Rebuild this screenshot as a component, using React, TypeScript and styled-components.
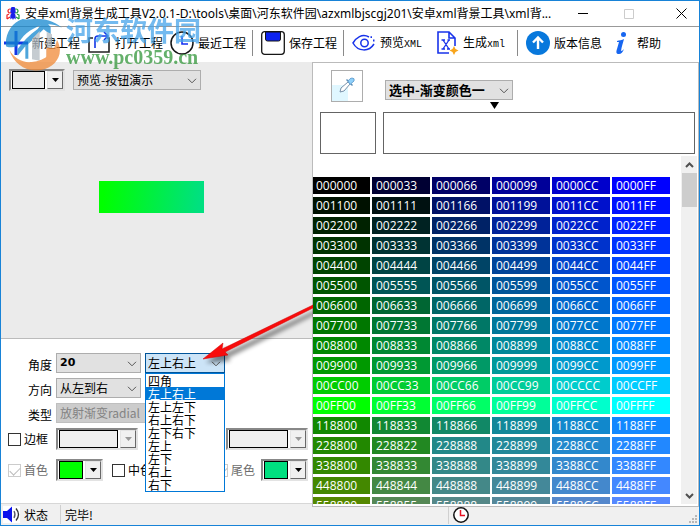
import React from 'react';
import styled, { createGlobalStyle, css } from 'styled-components';

const ui = `'Noto Sans CJK SC', sans-serif`;

const GlobalStyle = createGlobalStyle`
  * { box-sizing: border-box; }
  body { margin: 0; background: #fff; font: 12px/16px ${ui}; color: #000; }
  button, select, input { font: inherit; color: inherit; margin: 0; }
`;

const Window = styled.div`
  position: relative;
  display: flex;
  flex-direction: column;
  height: 100vh;
  border: 1px solid #1883d7;
  background: #fff;
  overflow: hidden;
`;

const TitleBar = styled.header`
  display: flex;
  align-items: center;
  flex: none;
  height: 26px;
  padding-left: 5px;
  border-bottom: 1px solid #999;
`;

const Title = styled.h1`
  flex: 1;
  min-width: 0;
  margin: 0 0 0 5px;
  font: 400 12px/24px 'Noto Sans', ${ui};
  white-space: nowrap;
`;

const Caption = styled.div`
  display: flex;
`;

const CaptionButton = styled.button`
  display: grid;
  place-items: center;
  width: 46px;
  height: 24px;
  padding: 0;
  border: 0;
  background: none;
  &:last-child { width: 47px; padding-left: 11px; }
`;

const Toolbar = styled.nav`
  display: flex;
  align-items: center;
  flex: none;
  gap: 7px;
  height: 35px;
  padding: 0 3px 3px;
`;

const Tool = styled.button`
  display: flex;
  align-items: center;
  flex: none;
  gap: 4px;
  width: 76px;
  height: 26px;
  padding: 0;
  border: 0;
  background: none;
  white-space: nowrap;
  svg { flex: none; }
`;

const Latin = styled.span`
  font-family: 'Liberation Mono', monospace;
  font-size: 10px;
`;

const Divider = styled.span`
  flex: none;
  width: 1px;
  height: 26px;
  margin: 0 1px 0 -1px;
  background: #8a8a8a;
`;

const Main = styled.main`
  display: grid;
  grid-template-columns: 311px minmax(0, 1fr);
  flex: 1;
  min-height: 0;
`;

const LeftPane = styled.section`
  display: flex;
  flex-direction: column;
  min-height: 0;
`;

const Preview = styled.div`
  display: flex;
  flex-direction: column;
  flex: 1;
  padding: 7px 8px;
  background: #ebebeb;
  border-bottom: 1px solid #bbb;
`;

const Line = styled.div`
  display: flex;
  align-items: center;
  gap: 8px;
`;

const Sample = styled.div`
  width: 105px;
  height: 32px;
  margin: 90px auto 0 90px;
  background: linear-gradient(95deg, #00ff00 5%, #00e080 95%);
`;

const Form = styled.form`
  display: flex;
  flex-direction: column;
  gap: 5px;
  padding: 14px 4px 22px 7px;
`;

const Row = styled.div`
  display: flex;
  align-items: center;
  height: 20px;
`;

const ColourRow = styled(Row)<{ $last?: boolean }>`
  height: 22px;
  margin-top: ${(p) => (p.$last ? 4 : 0)}px;
`;

const FieldLabel = styled.label`
  width: 48px;
  padding: 4px 4px 0 0;
  text-align: right;
`;

const SelectBox = styled.span<{ $width: number; $active?: boolean }>`
  position: relative;
  display: block;
  flex: none;
  width: ${(p) => p.$width}px;
  margin-right: ${(p) => (p.$active ? 0 : 4)}px;
  svg.chevron { position: absolute; right: 4px; top: 8px; pointer-events: none; }
`;

const NativeSelect = styled.select<{ $tone?: 'bold' | 'number' | 'active' }>`
  display: block;
  width: 100%;
  height: 20px;
  padding: 0 0 0 3px;
  border: 1px solid #adadad;
  border-radius: 0;
  outline: 0;
  background: #e1e1e1;
  appearance: none;
  line-height: 18px;
  &:disabled { background: #ccc; border-color: #bfbfbf; color: #838383; opacity: 1; }
  ${(p) => p.$tone === 'bold' && css`font-weight: 700; font-size: 13px;`}
  ${(p) => p.$tone === 'number' && css`font: 700 11px/18px 'DejaVu Sans', sans-serif;`}
  ${(p) => p.$tone === 'active' && css`padding-left: 2px; background: #cce4f7; border-color: #005499;`}
`;

const Options = styled.ul`
  position: absolute;
  z-index: 3;
  top: 20px;
  left: 0;
  width: 100%;
  margin: 0;
  padding: 0;
  border: 1px solid #0078d7;
  background: #fff;
  list-style: none;
`;

const Option = styled.li<{ $on: boolean }>`
  height: 13px;
  padding-left: 2px;
  line-height: 13px;
  background: ${(p) => (p.$on ? '#0078d7' : '#fff')};
  color: ${(p) => (p.$on ? '#fff' : '#000')};
`;

const Check = styled.label<{ $off?: boolean; $width?: number }>`
  display: flex;
  align-items: center;
  flex: none;
  gap: 3px;
  width: ${(p) => p.$width ?? 48}px;
  color: ${(p) => (p.$off ? '#6d6d6d' : '#000')};
  white-space: nowrap;
`;

const Tick = styled.input`
  appearance: none;
  flex: none;
  width: 13px;
  height: 13px;
  border: 1px solid #333;
  background: #fff;
  &:disabled { border-color: #ccc; }
  &:checked::after {
    content: '';
    display: block;
    width: 9px;
    height: 5px;
    margin: 2px 0 0 1px;
    border: solid #bbb;
    border-width: 0 0 1px 1px;
    transform: rotate(-45deg);
  }
`;

const ComboFrame = styled.button<{ $width: number }>`
  display: flex;
  flex: none;
  gap: 2px;
  width: ${(p) => p.$width}px;
  height: 22px;
  padding: 0;
  border: 2px solid;
  border-color: #888 #e3e3e3 #e3e3e3 #888;
  background: #fff;
`;

const Swatch = styled.span<{ $colour: string }>`
  flex: 1;
  margin-left: 1px;
  border: 1px solid #000;
  background: ${(p) => p.$colour};
`;

const Drop = styled.span`
  display: grid;
  place-items: center;
  width: 16px;
  background: #f0f0f0;
  border: 1px solid;
  border-color: #e3e3e3 #696969 #696969 #e3e3e3;
`;

const Spacer = styled.span`
  flex: 1;
`;

const RightPane = styled.section`
  position: relative;
  z-index: 1;
  display: flex;
  flex-direction: column;
  min-height: 0;
  margin-bottom: -4px;
  border: 1px solid #bbb;
  background: #fff;
`;

const Picker = styled.div`
  display: flex;
  align-items: flex-start;
  gap: 22px;
  padding: 7px 18px 0;
`;

const Dropper = styled.button`
  width: 32px;
  height: 32px;
  padding: 0;
  border: 1px solid #adadad;
  background: linear-gradient(#e0f7ff, #e0f7ff) left bottom / 16px 16px no-repeat #fff;
`;

const StopPicker = styled.div`
  display: flex;
  flex-direction: column;
  padding-top: 10px;
  svg.marker { align-self: flex-end; margin: 2px 18px 0 0; }
`;

const Swatches = styled.div`
  display: flex;
  flex: none;
  gap: 7px;
  height: 42px;
  margin: 3px 3px 2px 7px;
`;

const Well = styled.div<{ $grow?: boolean }>`
  flex: ${(p) => (p.$grow ? '1' : '0 0 56px')};
  border: 1px solid #646464;
`;

const Palette = styled.div`
  display: flex;
  flex: 1;
  min-height: 0;
  padding: 0 1px 2px 0;
`;

const Clip = styled.div`
  flex: 1;
  min-width: 0;
  overflow: hidden;
  padding-top: 18px;
`;

const Colours = styled.table`
  margin-left: -3px;
  border-spacing: 2px 3px;
  table-layout: fixed;
`;

const Cell = styled.td<{ $hex: string }>`
  width: 58px;
  min-width: 58px;
  height: 17px;
  padding: 0 0 0 4px;
  background: #${(p) => p.$hex};
  color: #fff;
  font: 12px/17px 'Open Sans', sans-serif;
`;

const ScrollTrack = styled.div`
  display: flex;
  flex-direction: column;
  align-items: center;
  justify-content: space-between;
  width: 16px;
  background: #f0f0f0;
`;

const ScrollEnd = styled.span`
  display: grid;
  place-items: center;
  height: 17px;
`;

const Thumb = styled.span`
  width: 15px;
  height: 34px;
  margin-bottom: auto;
  background: #cdcdcd;
`;

const StatusBar = styled.footer`
  display: grid;
  grid-template-columns: 59px 388px minmax(0, 1fr);
  align-items: center;
  flex: none;
  height: 22px;
  background: #f0f0f0;
  border-top: 1px solid #d7d7d7;
`;

const StatusCell = styled.div`
  display: flex;
  align-items: center;
  gap: 4px;
  height: 19px;
  padding-left: 2px;
  & + & { border-left: 1px solid #d0d0d0; padding-left: 4px; }
`;

const Grip = styled.svg`
  align-self: flex-end;
  margin: 0 1px 0 auto;
`;

const Watermark = styled.div`
  position: absolute;
  z-index: 5;
  left: 3px;
  top: 16px;
  display: flex;
  gap: 2px;
  opacity: 0.75;
  pointer-events: none;
`;

const WatermarkName = styled.div`
  font: 700 27px/26px ${ui};
  color: #45a4ea;
`;

const WatermarkSite = styled.div`
  font: 700 20px/28px 'Liberation Serif', serif;
  color: #32963a;
`;

const Pointer = styled.svg`
  position: absolute;
  z-index: 4;
  left: 52px;
  top: -52px;
  pointer-events: none;
`;

const Chevron = () => (
  <svg className="chevron" width="10" height="6" viewBox="0 0 10 6" fill="none" stroke="#555">
    <path d="M1 .8 5 4.8 9 .8" />
  </svg>
);

function Select({ id, label, value, width, tone, disabled, children }: {
  id: string; label?: string; value: string; width: number;
  tone?: 'bold' | 'number' | 'active'; disabled?: boolean; children?: React.ReactNode;
}) {
  return (
    <SelectBox $width={width} $active={tone === 'active'}>
      <NativeSelect id={id} aria-label={label} $tone={tone} disabled={disabled} defaultValue={value}>
        <option>{value}</option>
      </NativeSelect>
      <Chevron />
      {children}
    </SelectBox>
  );
}

function ColourCombo({ label, width, colour, disabled }: {
  label: string; width: number; colour: string; disabled?: boolean;
}) {
  return (
    <ComboFrame type="button" aria-label={label} $width={width} disabled={disabled}>
      <Swatch $colour={colour} />
      <Drop>
        <svg width="7" height="4" viewBox="0 0 7 4"><path d="M0 0h7L3.5 4z" fill={disabled ? '#999' : '#000'} /></svg>
      </Drop>
    </ComboFrame>
  );
}

const person = 'M0-4a2.2 2.2 0 1 1 .1 0M-2.6 4.5C-3-1-2-2 0-2s3 1 2.6 6.5L1 3 0 5-1 3z';

const AppIcon = () => (
  <svg width="14" height="14" viewBox="0 0 14 14">
    <g fill="none" stroke="#e22" strokeWidth="1.2"><circle cx="4" cy="4" r="2" /><path d="M1 12V8l2-1M1 12l3-2" /></g>
    <g fill="none" stroke="#1c9a3a" strokeWidth="1.2"><circle cx="10" cy="4" r="2" /><path d="M13 12V8l-2-1M13 12l-3-2" /></g>
    <path d={person} transform="translate(7 8)" fill="#1a20e8" />
    <circle cx="7" cy="4.2" r="2.6" fill="#1a20e8" />
  </svg>
);

const NewIcon = () => (
  <svg width="24" height="24" viewBox="0 0 24 24"><path d="M12 0v24M0 12h24" stroke="#1236e6" strokeWidth="3" /></svg>
);
const OpenIcon = () => (
  <svg width="24" height="24" viewBox="0 0 24 24" fill="none" strokeWidth="1.6">
    <path d="M6 7H2v14h20V7h-2" stroke="#222" />
    <path d="M8 17V8q0-3 3-3h10M17 1l4 4-4 4" stroke="#1236e6" />
  </svg>
);
const ClockIcon = () => (
  <svg width="24" height="24" viewBox="0 0 24 24" fill="none">
    <circle cx="12" cy="12" r="11" stroke="#151515" strokeWidth="1.5" />
    <path d="M12 5v8h6" stroke="#1430f0" strokeWidth="1.6" />
  </svg>
);
const SaveIcon = () => (
  <svg width="24" height="24" viewBox="0 0 24 24">
    <rect x=".7" y=".7" width="22.6" height="22.6" rx="3" fill="#fff" stroke="#151515" strokeWidth="1.3" />
    <path d="M4.500 1h15v7q0 2-2 2h-11q-2 0-2-2z" fill="#0c22f0" stroke="#151515" />
  </svg>
);
const EyeIcon = () => (
  <svg width="24" height="24" viewBox="0 0 24 24" fill="none" stroke="#1833ea" strokeWidth="1.5">
    <path d="M17 6C10 2 4 7 1 12c5 9 16 9 21 1" /><circle cx="12.5" cy="12" r="3.7" />
    <path d="M18.500 6.200h1.500M21 9.500h1.500" strokeWidth="1.8" />
  </svg>
);
const XmlIcon = () => (
  <svg width="24" height="24" viewBox="0 0 24 24" fill="none" stroke="#1833ea" strokeWidth="1.6">
    <path d="M14 22H3V1h11l6 6v8M14 1v6h6" />
    <path d="m8 9 6 9M14 9l-6 9M6.500 9H10M12.500 9H15M6.500 18H10M12 18h3" strokeWidth="1.3" />
    <path d="m19 15 1.500 3 3 1.500-3 1.500-1.500 3-1.500-3-3-1.500 3-1.500z" fill="#f8a51c" stroke="none" />
  </svg>
);
const UpdateIcon = () => (
  <svg width="24" height="24" viewBox="0 0 24 24" fill="none">
    <circle cx="12" cy="12" r="12" fill="#0878dc" />
    <path d="M12 18V6.500M7 11.500l5-5 5 5" stroke="#fff" strokeWidth="2.4" />
  </svg>
);
const HelpIcon = () => (
  <svg width="24" height="24" viewBox="0 0 24 24" fill="#1766f0">
    <circle cx="14.5" cy="3.5" r="2.5" />
    <path d="M8 10c2-.6 5-1 7-2-1 4-2.500 8-3 12 1 0 2-1 3-2-1 3-3 5-5 5-3 0-3-2-2-5l2-7H8z" />
  </svg>
);
const SpeakerIcon = () => (
  <svg width="17" height="17" viewBox="0 0 17 17" fill="none">
    <path fill="#fff" d="M0 0h17v17H0z" />
    <path d="M0 5h4l5-4.500v16L4 12H0z" fill="#0b12ee" />
    <path d="M11 5q2 3.500 0 7" stroke="#556" strokeWidth="1.3" /><path d="M13 2.500q5 6 0 12" stroke="#333" strokeWidth="1.3" />
  </svg>
);
const AlarmIcon = () => (
  <svg width="16" height="16" viewBox="0 0 16 16" fill="#fff">
    <circle cx="8" cy="8" r="7.2" stroke="#111" strokeWidth="1.5" />
    <path d="M7.500 3v5.500H12" fill="none" stroke="#e81123" strokeWidth="1.5" />
  </svg>
);
const DropperIcon = () => (
  <svg width="30" height="30" viewBox="0 0 30 30" fill="none">
    <path d="m8 21 1-4 7-6 2 2-6 7z" fill="#fff" stroke="#7890a8" />
    <path d="m14.500 8.500 6 6" stroke="#5f8db5" strokeWidth="1.4" />
    <path d="M16 10q2-3 4-3 3 0 2 3l-4 3.500z" fill="#8fd0fa" stroke="#6aa5d4" />
  </svg>
);

const WatermarkLogo = () => (
  <svg width="60" height="54" viewBox="0 0 180 162">
    <path d="M6 88C2 50 24 16 56 6c20 6 70-14 118 26-26-11-44-12-60-7C80 34 52 58 40 86c-10 5-27 7-34 2z" fill="#1487cf" />
    <path d="M41 96c14-20 34-42 60-60l20-28 19 22v24l-21-17-46 44v44h-9V88l-23 28z" fill="#1487cf" />
    <path d="M84 66l23-24v89l-23-4zM128 44l16 8v66l-16 12z" fill="#b4bcc2" />
    <path d="M16 99c16 26 40 39 67 36 43-4 68-30 76-67 24 44-5 83-47 91C66 167 30 141 16 99z" fill="#f18a38" />
    <path d="M127 92h26c-3 15-10 25-22 36h-4z" fill="#f18a38" />
  </svg>
);

const channels = ['00', '33', '66', '99', 'CC', 'FF'];
const greens = ['00', '11', '22', '33', '44', '55', '66', '77', '88', '99', 'CC', 'FF'];
const colourRows: string[][] = [
  ...greens.map((g) =>
    channels.map((b, i) => `00${g}${i === 1 && g > '00' && g < '66' ? g : b}`)),
  channels.map((b) => `1188${b}`),
  ...['22', '33', '44', '55'].map((r) =>
    ['00', r, '88', '99', 'CC', 'FF'].map((b) => `${r}88${b}`)),
];

const corners = ['四角', '左上右上', '左上左下', '右上右下', '左下右下', '左上', '左下', '右上', '右下'];

export default function App() {
  return (
    <Window>
      <GlobalStyle />
      <TitleBar>
        <AppIcon />
        <Title>{'安卓xml背景生成工具V2.0.1-D:\\tools\\桌面\\河东软件园\\azxmlbjscgj201\\安卓xml背景工具\\xml背...'}</Title>
        <Caption>
          <CaptionButton aria-label="最小化"><svg width="10" height="11"><path d="M0 5.500h10" stroke="#000" /></svg></CaptionButton>
          <CaptionButton aria-label="最大化" disabled><svg width="10" height="10"><path d="M.5.500h9v9h-9z" fill="none" stroke="#ccc" /></svg></CaptionButton>
          <CaptionButton aria-label="关闭"><svg width="11" height="11"><path d="m.5.500 10 10m0-10-10 10" stroke="#000" /></svg></CaptionButton>
        </Caption>
      </TitleBar>

      <Toolbar>
        <Tool><NewIcon />新建工程</Tool>
        <Tool><OpenIcon />打开工程</Tool>
        <Tool><ClockIcon />最近工程</Tool>
        <Divider />
        <Tool><SaveIcon />保存工程</Tool>
        <Divider />
        <Tool><EyeIcon /><span>预览<Latin>XML</Latin></span></Tool>
        <Tool><XmlIcon /><span>生成<Latin>xml</Latin></span></Tool>
        <Divider />
        <Tool><UpdateIcon />版本信息</Tool>
        <Tool><HelpIcon />帮助</Tool>
      </Toolbar>

      <Main>
        <LeftPane>
          <Preview>
            <Line>
              <ColourCombo label="背景颜色" width={56} colour="#ebebeb" />
              <Select id="demo" label="预览" value="预览-按钮演示" width={128} />
            </Line>
            <Sample />
          </Preview>
          <Form>
            <Row>
              <FieldLabel htmlFor="angle">角度</FieldLabel>
              <Select id="angle" value="20" width={85} tone="number" />
              <Select id="corner" label="圆角" value="左上右上" width={80} tone="active">
                <Options role="listbox">
                  {corners.map((c, i) => (
                    <Option key={c} role="option" aria-selected={i === 1} $on={i === 1}>{c}</Option>
                  ))}
                </Options>
                <Pointer width="116" height="72" viewBox="0 0 116 72">
                  <defs>
                    <filter id="soft" x="-10%" y="-10%" width="130%" height="140%"><feGaussianBlur stdDeviation="2" /></filter>
                  </defs>
                  <path d="m6 58 20-16-1 6 91-43v4L28 53l3 3z" fill="#000" opacity=".45" transform="translate(3 4)" filter="url(#soft)" />
                  <path d="m6 58 20-16-1 6 91-44v3L28 51l3 3z" fill="#f80c0c" stroke="#d00000" strokeWidth=".5" />
                </Pointer>
              </Select>
            </Row>
            <Row>
              <FieldLabel htmlFor="direction">方向</FieldLabel>
              <Select id="direction" value="从左到右" width={85} />
            </Row>
            <Row>
              <FieldLabel htmlFor="kind">类型</FieldLabel>
              <Select id="kind" value="放射渐变radial" width={168} disabled />
            </Row>
            <ColourRow>
              <Check><Tick type="checkbox" />边框</Check>
              <ColourCombo label="边框颜色" width={82} colour="#f0f0f0" disabled />
              <Spacer />
              <ColourCombo label="填充颜色" width={82} colour="#f0f0f0" disabled />
            </ColourRow>
            <ColourRow $last>
              <Check $off><Tick type="checkbox" defaultChecked disabled />首色</Check>
              <ColourCombo label="首色颜色" width={47} colour="#00ff00" />
              <Spacer />
              <Check $width={103}><Tick type="checkbox" />中色</Check>
              <Check $off $width={46}><Tick type="checkbox" defaultChecked disabled />尾色</Check>
              <ColourCombo label="尾色颜色" width={47} colour="#00e080" />
            </ColourRow>
          </Form>
        </LeftPane>

        <RightPane>
          <Picker>
            <Dropper aria-label="取色"><DropperIcon /></Dropper>
            <StopPicker>
              <Select id="stop" label="选中颜色" value="选中-渐变颜色一" width={128} tone="bold" />
              <svg className="marker" width="9" height="7"><path d="M0 0h9L4.500 7z" /></svg>
            </StopPicker>
          </Picker>
          <Swatches><Well /><Well $grow /></Swatches>
          <Palette>
            <Clip>
              <Colours>
                <tbody>
                  {colourRows.map((row) => (
                    <tr key={row[0]}>{row.map((hex) => <Cell key={hex} $hex={hex}>{hex}</Cell>)}</tr>
                  ))}
                </tbody>
              </Colours>
            </Clip>
            <ScrollTrack>
              <ScrollEnd><svg width="9" height="6" fill="none" stroke="#505050" strokeWidth="2"><path d="m1 5 3.500-3.500L8 5" /></svg></ScrollEnd>
              <Thumb />
              <ScrollEnd><svg width="9" height="6" fill="none" stroke="#505050" strokeWidth="2"><path d="m1 1 3.500 3.500L8 1" /></svg></ScrollEnd>
            </ScrollTrack>
          </Palette>
        </RightPane>
      </Main>

      <StatusBar>
        <StatusCell><SpeakerIcon />状态</StatusCell>
        <StatusCell>完毕!</StatusCell>
        <StatusCell>
          <AlarmIcon />
          <Grip width="9" height="9" fill="#b8b8b8"><path d="M6 0h2v2H6zM3 3h2v2H3zM6 3h2v2H6zM0 6h2v2H0zM3 6h2v2H3zM6 6h2v2H6z" /></Grip>
        </StatusCell>
      </StatusBar>

      <Watermark>
        <WatermarkLogo />
        <div>
          <WatermarkName>河东软件园</WatermarkName>
          <WatermarkSite>www.pc0359.cn</WatermarkSite>
        </div>
      </Watermark>
    </Window>
  );
}
